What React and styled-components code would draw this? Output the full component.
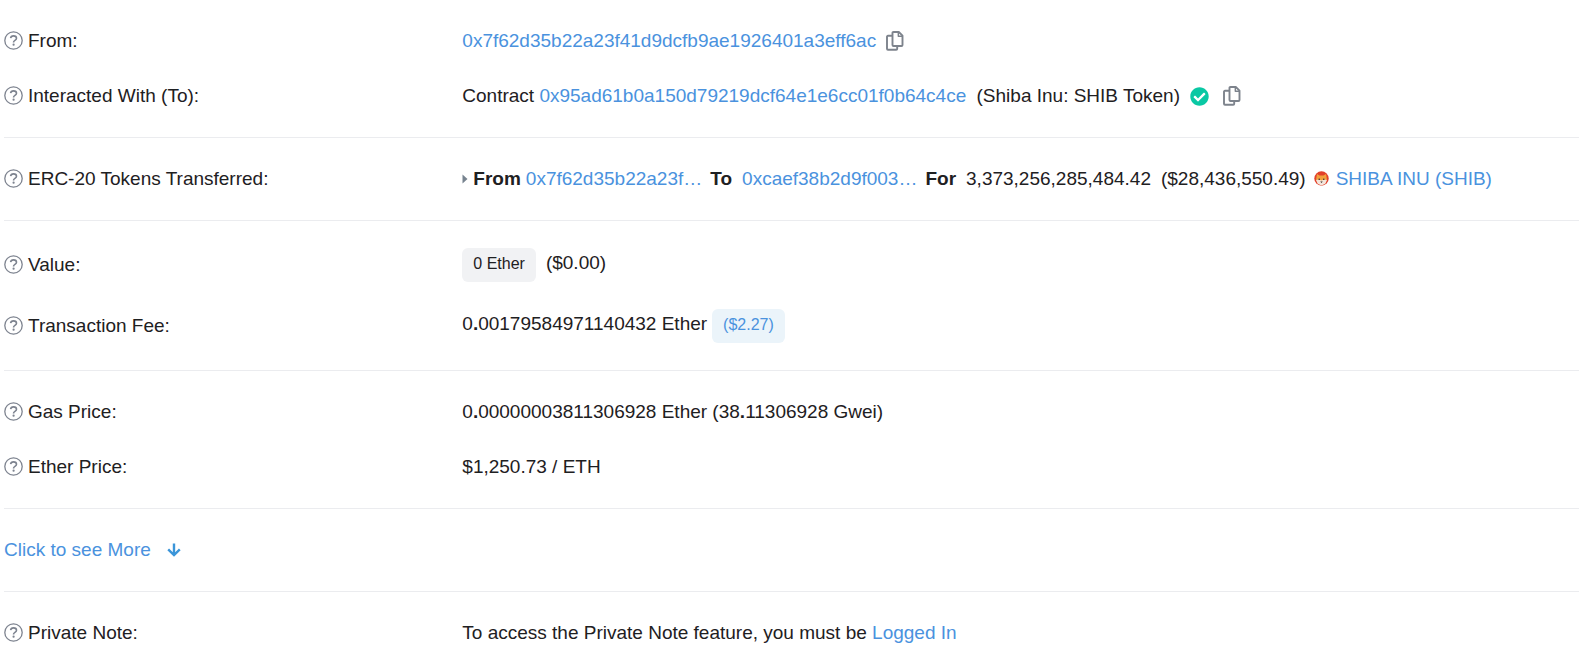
import React, { useState } from 'react'

import styled, { createGlobalStyle } from 'styled-components';

// icons
import { FaCheckCircle } from 'react-icons/fa';


const GlobalStyle = createGlobalStyle`
  body {
    margin:0 ;
    background-color:#fff ;
    color:#1e2022 ;
    font-family:"Liberation Sans", Arial, sans-serif ;
    font-size:19px ;
    line-height:28px ;
  }
`

const Container = styled.main`
  padding-left:4px ;
`
const Section = styled.section`
  display:flex ;
  flex-direction:column ;
  gap:27px ;
  padding:27px 0 ;

  & + & {
    border-top:1px solid #ebecef ;
  }
`
const Row = styled.div`
  display:flex ;
  align-items:center ;
`
const Label = styled.div`
  flex:0 0 29.1% ;
  display:flex ;
  align-items:center ;
  gap:5px ;
`
const Value = styled.div`
  flex:1 ;
  min-width:0 ;
  display:flex ;
  flex-wrap:wrap ;
  align-items:${({$align}) => $align || 'center'} ;
  column-gap:${({$gap}) => $gap || 5}px ;
`
const Link = styled.a`
  color:#4a92de ;
  text-decoration:none ;
`
const Badge = styled.span`
  padding:5px 11px 7px ;
  border-radius:6px ;
  font-size:16px ;
  line-height:22px ;
  color:${({$info}) => $info ? '#4a92de' : '#1e2022'} ;
  background-color:${({$info}) => $info ? '#ebf4fa' : '#f1f2f4'} ;
`
const IconButton = styled.button`
  display:flex ;
  padding:0 ;
  border:0 ;
  background:none ;
  color:#7d838c ;
  cursor:pointer ;
`
const MoreButton = styled.button`
  display:flex ;
  align-items:center ;
  align-self:flex-start ;
  gap:16px ;
  padding:0 ;
  border:0 ;
  background:none ;
  color:#4a92de ;
  font:inherit ;
  cursor:pointer ;
`
const Transfer = styled.div`
  display:flex ;
  flex-wrap:wrap ;
  align-items:center ;
  column-gap:8px ;
`
const Pair = styled.span`
  display:flex ;
  align-items:center ;
  gap:${({$gap}) => $gap}px ;
`
const Verified = styled(FaCheckCircle)`
  color:#0ac8a4 ;
  margin:0 9px 0 5px ;
`

const HelpIcon = () => (
  <svg width="19" height="20" viewBox="0 0 19 20" fill="none" stroke="#7d838f" aria-hidden="true">
    <circle cx="9.5" cy="9.5" r="8.7" strokeWidth="1.3"/>
    <path d="M6.6 7.2C6.8 5.7 7.9 4.9 9.5 4.9c1.7 0 3 .9 3 2.4 0 2.1-2.9 2-2.9 3.8v.4" strokeWidth="1.6"/>
    <circle cx="9.6" cy="13.7" r="1.1" fill="#7d838f" stroke="none"/>
  </svg>
)

const CopyIcon = () => (
  <svg width="18" height="21" viewBox="0 0 18 21" fill="none" stroke="currentColor" strokeWidth="1.9" strokeLinejoin="round" aria-hidden="true">
    <path d="M7.5 1H12.8L16.5 4.7V14Q16.5 15 15.5 15H7.5Q6.5 15 6.5 14V2Q6.5 1 7.5 1Z"/>
    <path d="M12.3 1.2V5.2H16.3" strokeWidth="1.4"/>
    <path d="M6.5 4.8H2Q1 4.8 1 5.8V17.8Q1 18.8 2 18.8H10.2Q11.2 18.8 11.2 17.8V15"/>
  </svg>
)

const Caret = () => (
  <svg width="6" height="10" viewBox="0 0 6 10" aria-hidden="true">
    <path d="M0.5 0.5L5.5 5L0.5 9.5Z" fill="#77838f"/>
  </svg>
)

const ArrowDown = () => (
  <svg width="14" height="14" viewBox="0 0 14 14" fill="none" stroke="#3b95d9" strokeWidth="2.4" aria-hidden="true">
    <path d="M7 0.5V12M1.2 6.3L7 12L12.8 6.3"/>
  </svg>
)

const ShibaIcon = () => (
  <svg width="15" height="16" viewBox="0 0 15 16" aria-hidden="true">
    <circle cx="7.5" cy="7.5" r="7.2" fill="#e2402a"/>
    <path d="M3 3L5.5 4.5H9.5L12 3L12.9 8.3L11.5 11.8L7.5 14L3.5 11.8L2.1 8.3Z" fill="#f2a03d"/>
    <path d="M2 9L5 8.5L7.5 9.5L10 8.5L13 9L11.3 12.8L7.5 14.5L3.7 12.8Z" fill="#f3e6dc"/>
    <circle cx="5.2" cy="8.3" r=".8" fill="#3b2a26"/>
    <circle cx="9.8" cy="8.3" r=".8" fill="#3b2a26"/>
    <path d="M6.3 10.5H8.7L7.5 12Z" fill="#3b2a26"/>
  </svg>
)

const CopyButton = ({ text }) => {

  const handleCopy = ()=>{
    navigator.clipboard?.writeText(text)
  }

  return (
    <IconButton type="button" aria-label="Copy address" onClick={handleCopy}>
      <CopyIcon/>
    </IconButton>
  )
}

const DetailRow = ({ label, align, gap, children }) => (
  <Row>
    <Label><HelpIcon/>{label}:</Label>
    <Value $align={align} $gap={gap}>{children}</Value>
  </Row>
)

const from = '0x7f62d35b22a23f41d9dcfb9ae1926401a3eff6ac'
const contract = '0x95ad61b0a150d79219dcf64e1e6cc01f0b64c4ce'

const App = () => {

  const [isOpen, setIsOpen] = useState(false)

  return (
    <>
      <GlobalStyle/>
      <Container>

        <Section>
          <DetailRow label="From" gap={10}>
            <Link href="#from">{from}</Link>
            <CopyButton text={from}/>
          </DetailRow>
          <DetailRow label="Interacted With (To)">
            <span>Contract <Link href="#contract">{contract}</Link></span>
            <Pair $gap={5}>
              <span>&nbsp;(Shiba Inu: SHIB Token)</span>
              <Verified size={19}/>
              <CopyButton text={contract}/>
            </Pair>
          </DetailRow>
        </Section>

        <Section>
          <DetailRow label="ERC-20 Tokens Transferred">
            <Transfer>
              <Pair $gap={5}>
                <Caret/>
                <b>From</b>
                <Link href="#from">{from.slice(0,16)}…</Link>
              </Pair>
              <Pair $gap={10}>
                <b>To</b>
                <Link href="#receiver">0xcaef38b2d9f003…</Link>
              </Pair>
              <Pair $gap={10}>
                <b>For</b>
                <span>3,373,256,285,484.42</span>
                <span>($28,436,550.49)</span>
              </Pair>
              <Pair $gap={7}>
                <ShibaIcon/>
                <Link href="#token">SHIBA INU (SHIB)</Link>
              </Pair>
            </Transfer>
          </DetailRow>
        </Section>

        <Section>
          <DetailRow label="Value" align="baseline" gap={10}>
            <Badge>0 Ether</Badge>
            <span>($0.00)</span>
          </DetailRow>
          <DetailRow label="Transaction Fee" align="baseline">
            <span>0<b>.</b>00179584971140432 Ether</span>
            <Badge $info>($2.27)</Badge>
          </DetailRow>
        </Section>

        <Section>
          <DetailRow label="Gas Price">
            <span>0<b>.</b>00000003811306928 Ether (38<b>.</b>11306928 Gwei)</span>
          </DetailRow>
          <DetailRow label="Ether Price">
            <span>$1,250.73 / ETH</span>
          </DetailRow>
        </Section>

        <Section>
          <MoreButton type="button" aria-expanded={isOpen} onClick={()=>setIsOpen(!isOpen)}>
            Click to see {isOpen ? 'Less' : 'More'}
            <ArrowDown/>
          </MoreButton>
        </Section>

        <Section>
          <DetailRow label="Private Note">
            <span>To access the Private Note feature, you must be <Link href="#login">Logged In</Link></span>
          </DetailRow>
        </Section>

      </Container>
    </>
  )
}

export default App
